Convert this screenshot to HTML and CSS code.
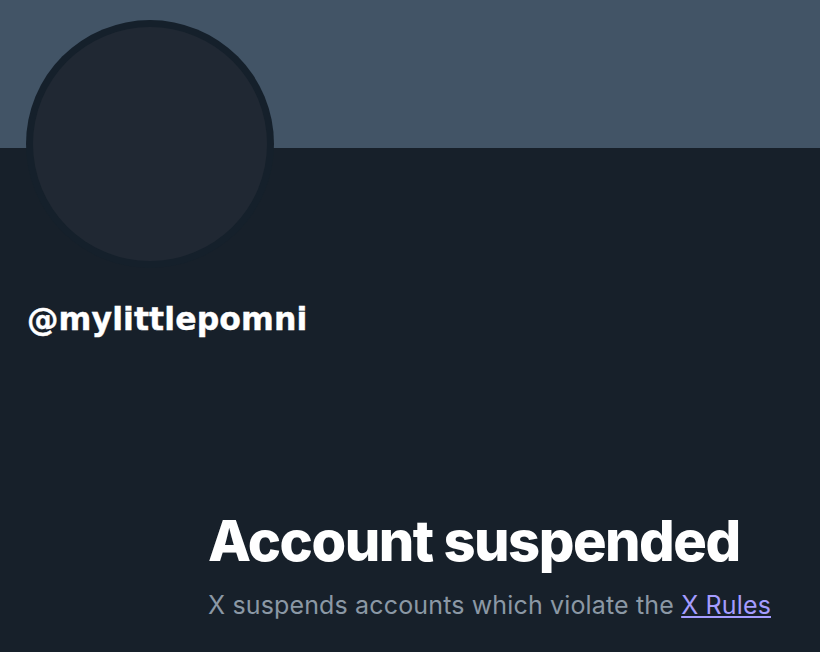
FILE: index.html
```html
<!DOCTYPE html>
<html lang="en">
<head>
<meta charset="utf-8">
<link rel="stylesheet" href="styles.css">
</head>
<body>
<div class="page">
  <div class="banner"></div>
  <div class="profile">
    <div class="avatar"><div class="avatar-inner"></div></div>
    <div class="handle">@mylittlepomni</div>
  </div>
  <div class="notice">
    <h1 class="title">Account suspended</h1>
    <p class="desc">X suspends accounts which violate the <a class="rules" href="#">X Rules</a></p>
  </div>
</div>
</body>
</html>
```
FILE: styles.css
```css
html, body {
  margin: 0;
  padding: 0;
  background: #17202a;
  height: 100%;
  overflow: hidden;
}
.page {
  font-family: "Inter", "Noto Sans", sans-serif;
  color: #ffffff;
}
.banner {
  height: 148px;
  background: #425466;
}
.profile {
  padding-left: 26px;
  margin-top: -128px;
}
.avatar {
  width: 248px;
  height: 248px;
  box-sizing: border-box;
  border-radius: 50%;
  background: #15202b;
  padding: 7px;
}
.avatar-inner {
  width: 100%;
  height: 100%;
  border-radius: 50%;
  background: #202833;
}
.handle {
  margin-top: 33px;
  font-family: "DejaVu Sans", "Inter", sans-serif;
  font-size: 31.5px;
  font-weight: 700;
  line-height: 36px;
  padding-left: 1px;
  letter-spacing: 0.1px;
  -webkit-text-stroke: 0.4px #ffffff;
}
.notice {
  padding-left: 208px;
  margin-top: 172px;
}
.title {
  margin: 0;
  font-size: 56px;
  font-weight: 800;
  line-height: 64px;
  letter-spacing: -1.5px;
}
.desc {
  margin: 16px 0 0;
  font-size: 25px;
  line-height: 32px;
  letter-spacing: 0.15px;
  color: #8b98a5;
  font-weight: 400;
}
.rules {
  color: #a59cff;
  text-decoration: underline;
}
```
